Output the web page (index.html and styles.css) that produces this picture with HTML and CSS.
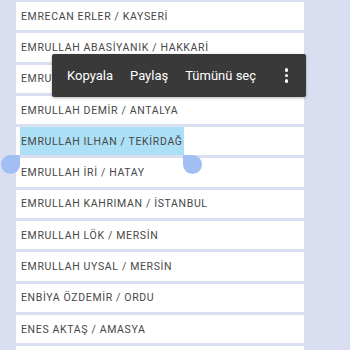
FILE: index.html
```html
<!DOCTYPE html>
<html lang="tr">
<head>
<meta charset="utf-8">
<link rel="stylesheet" href="styles.css">
</head>
<body>
<div class="page">
  <ul class="list">
    <li class="row"><span class="txt">EMRECAN ERLER / KAYSERİ</span></li>
    <li class="row"><span class="txt">EMRULLAH ABASİYANIK / HAKKARİ</span></li>
    <li class="row"><span class="txt">EMRULLAH BAYRAM / ANKARA</span></li>
    <li class="row"><span class="txt">EMRULLAH DEMİR / ANTALYA</span></li>
    <li class="row selected"><span class="txt sel">EMRULLAH ILHAN / TEKİRDAĞ</span><span class="handle hl"></span><span class="handle hr"></span></li>
    <li class="row"><span class="txt">EMRULLAH İRİ / HATAY</span></li>
    <li class="row"><span class="txt">EMRULLAH KAHRIMAN / İSTANBUL</span></li>
    <li class="row"><span class="txt">EMRULLAH LÖK / MERSİN</span></li>
    <li class="row"><span class="txt">EMRULLAH UYSAL / MERSİN</span></li>
    <li class="row"><span class="txt">ENBİYA ÖZDEMİR / ORDU</span></li>
    <li class="row"><span class="txt">ENES AKTAŞ / AMASYA</span></li>
    <li class="row"></li>
  </ul>
  <div class="toolbar">
    <span class="act">Kopyala</span>
    <span class="act">Paylaş</span>
    <span class="act">Tümünü seç</span>
    <span class="more"><i></i><i></i><i></i></span>
  </div>
</div>
</body>
</html>
```
FILE: styles.css
```css
html, body {
  margin: 0;
  padding: 0;
  background: #d9dff0;
  overflow: hidden;
}
.page {
  position: relative;
  width: 350px;
  height: 350px;
  overflow: hidden;
}
.list {
  list-style: none;
  margin: 0 0 0 16px;
  padding: 2px 0 0 0;
  width: 288px;
  display: flex;
  flex-direction: column;
  gap: 3px;
}
.row {
  position: relative;
  height: 28.3px;
  background: #ffffff;
  display: flex;
  align-items: stretch;
  padding-left: 4px;
  box-sizing: border-box;
}
.txt {
  display: flex;
  align-items: center;
  padding: 0 1px;
  font-family: Roboto, "Noto Sans", sans-serif;
  font-size: 10.5px;
  letter-spacing: 0.65px;
  color: #474747;
  white-space: nowrap;
}
.sel {
  background: #ace0f6;
}
.handle {
  position: absolute;
  z-index: 2;
  top: 100%;
  width: 19px;
  height: 19px;
  background: #a2bff3;
  border-radius: 50%;
}
.hl {
  left: -15px;
  border-top-right-radius: 0;
}
.hr {
  left: 167px;
  border-top-left-radius: 0;
}
.toolbar {
  position: absolute;
  z-index: 3;
  left: 52px;
  top: 54px;
  width: 254px;
  height: 43px;
  background: #393939;
  border-radius: 2px;
  box-shadow: 0 1px 3px rgba(0,0,0,0.3);
  display: flex;
  align-items: center;
  padding-left: 15px;
  box-sizing: border-box;
  font-family: Roboto, "Noto Sans", sans-serif;
  font-size: 13px;
  color: #ffffff;
}
.act {
  margin-right: 17px;
}
.more {
  margin-left: auto;
  margin-right: 18px;
  display: flex;
  flex-direction: column;
  gap: 2px;
}
.more i {
  display: block;
  width: 3.5px;
  height: 3.5px;
  border-radius: 50%;
  background: #ffffff;
}
```
